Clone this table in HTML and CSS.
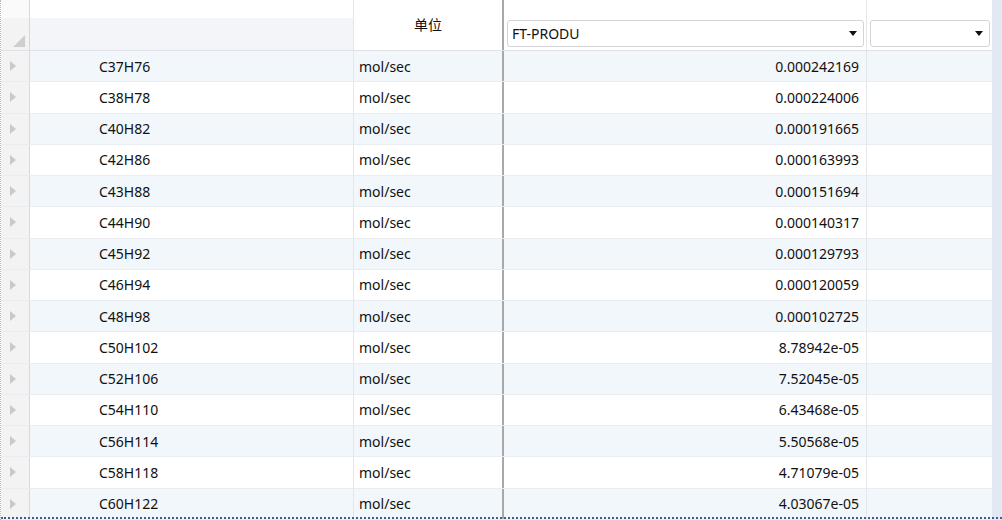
FILE: index.html
```html
<!DOCTYPE html>
<html>
<head>
<meta charset="utf-8">
<link rel="stylesheet" href="styles.css">
</head>
<body>
<div class="frame">
  <div class="grid">
    <div class="head">
      <div class="corner"><div class="corner-top"></div><div class="corner-bot"><span class="tri-corner"></span></div></div>
      <div class="h c1"><div class="h-top"></div><div class="h-bot"></div></div>
      <div class="h c2 plain"><span>单位</span></div>
      <div class="sep"></div>
      <div class="h c3 plain"><div class="combo"><span>FT-PRODU</span><span class="arrow"></span></div></div>
      <div class="h c4 plain"><div class="combo"><span></span><span class="arrow"></span></div></div>
    </div>
    <div class="body" id="body"></div>
  </div>
  <div class="strip"></div>
</div>
<script src="app.js"></script>
</body>
</html>
```

FILE: app.js
```js
const data = [
  ["C37H76","0.000242169"],["C38H78","0.000224006"],["C40H82","0.000191665"],
  ["C42H86","0.000163993"],["C43H88","0.000151694"],["C44H90","0.000140317"],
  ["C45H92","0.000129793"],["C46H94","0.000120059"],["C48H98","0.000102725"],
  ["C50H102","8.78942e-05"],["C52H106","7.52045e-05"],["C54H110","6.43468e-05"],
  ["C56H114","5.50568e-05"],["C58H118","4.71079e-05"],["C60H122","4.03067e-05"]
];
const body = document.getElementById('body');
data.forEach((d, i) => {
  const r = document.createElement('div');
  r.className = 'row' + (i % 2 === 0 ? ' alt' : '');
  r.innerHTML = '<div class="rh"><span class="tri"></span></div>' +
    '<div class="cell c1 name">' + d[0] + '</div>' +
    '<div class="cell c2">mol/sec</div>' +
    '<div class="sep"></div>' +
    '<div class="cell c3 num">' + d[1] + '</div>' +
    '<div class="cell c4"></div>';
  body.appendChild(r);
});
```

FILE: styles.css
```css
* { box-sizing: border-box; }
html, body { margin: 0; padding: 0; }
body {
  width: 1002px; height: 520px; overflow: hidden; background: #fff;
  font-family: "Noto Sans", "Noto Sans CJK SC", sans-serif; font-size: 14px; color: #111;
}
.frame { display: flex; height: 520px; overflow: hidden; border-left: 1px dotted #b8b8b8; position: relative; }
.frame::after { content: ""; position: absolute; left: 0; right: 0; bottom: 1px; border-bottom: 2px dotted #3d5f8f; }
.grid { width: 991px; display: flex; flex-direction: column; }
.strip { width: 10px; background: #e1eaf4; }
.head { display: flex; height: 51px; flex-shrink: 0; border-bottom: 1px solid #dde1e6; }
.corner { width: 29px; border-right: 1px solid #d8d8d8; display: flex; flex-direction: column; background: #f3f3f3; }
.corner-top { height: 18px; background: #fafafa; }
.corner-bot { flex: 1; position: relative; }
.tri-corner { position: absolute; right: 4px; bottom: 3px; width: 0; height: 0;
  border-left: 12px solid transparent; border-bottom: 12px solid #cfcfcf; }
.h { display: flex; flex-direction: column; }
.h-top { height: 18px; background: #fff; }
.h-bot { flex: 1; background: #f3f5f8; }
.c1 { width: 324px; border-right: 1px solid #e3e6ea; }
.c2 { width: 148px; }
.sep { width: 2px; background: #a8a8a8; }
.c3 { width: 363px; border-right: 1px solid #e3e6ea; }
.c4 { flex: 1; }
.plain { background: #fff; }
.c2.plain { align-items: center; justify-content: center; padding-bottom: 2px; }
.c3.plain, .c4.plain { justify-content: flex-end; padding: 0 2px 3px 3px; }
.combo { height: 27px; border: 1px solid #d4d4d4; border-radius: 3px; background: #fff;
  display: flex; align-items: center; justify-content: space-between; padding: 0 6px 0 4px; }
.arrow { width: 0; height: 0; border-left: 4.5px solid transparent; border-right: 4.5px solid transparent; border-top: 5px solid #111; }
.body { flex: 1; display: flex; flex-direction: column; }
.row { display: flex; height: 31.25px; flex-shrink: 0; border-bottom: 1px solid #e9ecf0; background: #fff; }
.row.alt { background: #f2f7fc; }
.rh { width: 29px; border-right: 1px solid #d8d8d8; background: #f3f3f3; display: flex; align-items: center; padding-left: 9px; }
.tri { width: 0; height: 0; border-top: 5px solid transparent; border-bottom: 5px solid transparent; border-left: 6px solid #c9c9c9; }
.cell { display: flex; align-items: center; }
.cell.c1 { padding-left: 69px; }
.cell.c2 { padding-left: 5px; }
.cell.num { justify-content: flex-end; padding-right: 7px; }
```
